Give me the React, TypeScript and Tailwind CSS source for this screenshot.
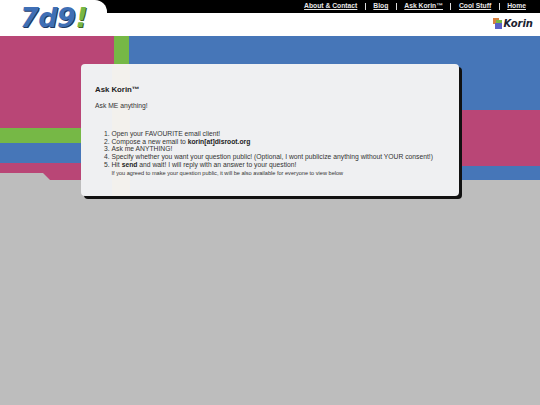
const sans = "font-['Liberation_Sans',Arial,sans-serif]";

const links = ["About & Contact", "Blog", "Ask Korin™", "Cool Stuff", "Home"];

function Backdrop() {
  return (
    <svg className="absolute inset-0" width="540" height="405" viewBox="0 0 540 405">
      <rect x="0" y="36" width="540" height="144" fill="#4676b8" />
      <rect x="0" y="36" width="114" height="92" fill="#b94676" />
      <rect x="114" y="36" width="15" height="92" fill="#76b846" />
      <rect x="0" y="128" width="114" height="15" fill="#76b846" />
      <rect x="0" y="163" width="129" height="17" fill="#b94676" />
      <rect x="440" y="110" width="100" height="56" fill="#b94676" />
      <polygon points="0,173 43,173 50,180 0,180" fill="#bdbdbd" />
    </svg>
  );
}

function KorinLogo() {
  return (
    <div className="flex items-center">
      <svg width="10" height="11" viewBox="0 0 10 11">
        <rect x="0" y="0" width="6" height="6" fill="#d9813f" />
        <rect x="3" y="2" width="6" height="4" fill="#76b846" />
        <rect x="2" y="5" width="7" height="6" fill="#5a62c8" />
      </svg>
      <span className="font-['DejaVu_Sans',sans-serif] text-[10px] leading-none font-bold italic text-[#1a2230]">Korin</span>
    </div>
  );
}

export default function App() {
  return (
    <div className={`relative h-[405px] w-[540px] overflow-hidden bg-[#bdbdbd] ${sans}`}>
      <Backdrop />

      <header className="relative h-9 bg-white">
        <div className="flex h-[13px] justify-end bg-black pr-[14px]">
          <nav className="flex items-center text-[6.75px] font-bold text-[#e8e8e8]">
            {links.map((link, i) => (
              <span key={link} className="flex items-center">
                {i > 0 && <span className="mx-[7.5px] h-[7px] w-px bg-[#dddddd]" />}
                <a className="underline">{link}</a>
              </span>
            ))}
          </nav>
        </div>
        <div className="absolute top-0 left-0 h-[13px] w-[107px] rounded-tr-[12px] bg-white" />
        <div className="absolute top-[3px] left-[20px] font-['DejaVu_Sans',sans-serif] text-[27px] leading-[30px] font-bold tracking-[-0.5px] italic">
          <span className="text-[#3f6fb5] [text-shadow:1px_1px_0_#1d3a66]">7d9</span>
          <span className="text-[#76b846] [text-shadow:1px_1px_0_#3c5f22]">!</span>
        </div>
        <div className="absolute top-[18px] right-[7px]">
          <KorinLogo />
        </div>
      </header>

      <main className="relative mt-7 ml-[81px] h-[132px] w-[378px] rounded-[4px] bg-[#eff0f2] pt-[21px] pl-[14px] text-[#333333] shadow-[3px_3px_0_#111111]">
        <div className="absolute top-0 bottom-0 left-[31px] w-[18px] bg-[#f3f1ed]" />
        <div className="relative">
          <h2 className="text-[7.8px] leading-[10px] font-bold text-[#222222]">Ask Korin™</h2>
          <p className="mt-[6px] text-[6.75px] leading-[10px]">Ask ME anything!</p>
          <ol className="mt-[19px] ml-[16.5px] list-decimal text-[6.75px] leading-[7.7px]">
            <li>Open your FAVOURITE email client!</li>
            <li>
              Compose a new email to <b className="text-[#222222]">korin[at]disroot.org</b>
            </li>
            <li>Ask me ANYTHING!</li>
            <li>Specify whether you want your question public! (Optional, I wont publicize anything without YOUR consent!)</li>
            <li>
              Hit <b className="text-[#222222]">send</b> and wait! I will reply with an answer to your question!
            </li>
          </ol>
          <p className="mt-[1px] ml-[16.5px] text-[5.6px] leading-[7px]">If you agreed to make your question public, it will be also available for everyone to view below</p>
        </div>
      </main>
    </div>
  );
}
